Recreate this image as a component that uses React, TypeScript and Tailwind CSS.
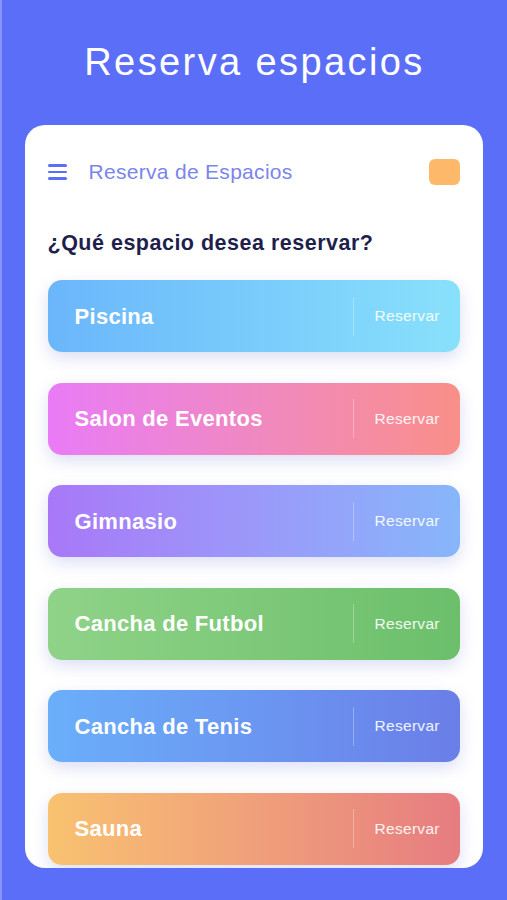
const spaces = [
  { name: "Piscina", bg: "bg-gradient-to-r from-[#6bb6fb] to-[#88e1fb]" },
  { name: "Salon de Eventos", bg: "bg-gradient-to-r from-[#e97bf6] to-[#f98f88]" },
  { name: "Gimnasio", bg: "bg-gradient-to-r from-[#a878f8] to-[#86b6fa]" },
  { name: "Cancha de Futbol", bg: "bg-gradient-to-r from-[#8fd388] to-[#6bbf6b]" },
  { name: "Cancha de Tenis", bg: "bg-gradient-to-r from-[#6aaffa] to-[#6a7ee8]" },
  { name: "Sauna", bg: "bg-gradient-to-r from-[#f8c270] to-[#e67c80]" },
];

const SpaceCard = ({ name, bg }: { name: string; bg: string }) => (
  <div
    className={`${bg} h-[72px] rounded-[14px] flex flex-row items-center shadow-[0_6px_16px_rgba(96,110,210,0.22)]`}
  >
    <span className="flex-1 pl-[27px] text-white text-[22px] tracking-[0.3px] font-bold font-['Liberation_Sans',Arial,sans-serif]">
      {name}
    </span>
    <div className="w-px h-[39px] bg-white/30" />
    <span className="w-[106px] pl-[21px] text-white/90 text-[15.5px] tracking-[0.3px] font-['Liberation_Sans',Arial,sans-serif]">
      Reservar
    </span>
  </div>
);

const App = () => {
  return (
    <div className="min-h-[900px] w-full bg-[#5b6ef7] border-l-2 border-[#8796fa] flex flex-col items-center">
      <h1 className="mt-[38px] text-white text-[38px] leading-[48px] tracking-[2.4px] font-['Liberation_Sans',Arial,sans-serif]">
        Reserva espacios
      </h1>
      <div className="mt-[39px] w-[458px] ml-[-2px] bg-white rounded-[20px] overflow-hidden pt-[34px] px-[23px] pb-[3px]">
        <div className="flex flex-row items-center h-[26px]">
          <div className="w-[19px] flex flex-col gap-[4px]">
            <span className="block h-[2.5px] bg-[#5b6ef7] rounded-full" />
            <span className="block h-[2.5px] bg-[#5b6ef7] rounded-full" />
            <span className="block h-[2.5px] bg-[#5b6ef7] rounded-full" />
          </div>
          <span className="ml-[22px] flex-1 text-[21px] tracking-[0.3px] text-[#7b85ea] font-['Liberation_Sans',Arial,sans-serif]">
            Reserva de Espacios
          </span>
          <div className="w-[31px] h-[26px] rounded-[6px] bg-[#fdb969]" />
        </div>
        <h2 className="mt-[44px] text-[21.5px] tracking-[0.5px] leading-[28px] font-bold text-[#1f1f4d] font-['Liberation_Sans',Arial,sans-serif]">
          ¿Qué espacio desea reservar?
        </h2>
        <div className="mt-[23px] flex flex-col gap-[30.5px]">
          {spaces.map((s) => (
            <SpaceCard key={s.name} name={s.name} bg={s.bg} />
          ))}
        </div>
      </div>
    </div>
  );
};

export default App;
